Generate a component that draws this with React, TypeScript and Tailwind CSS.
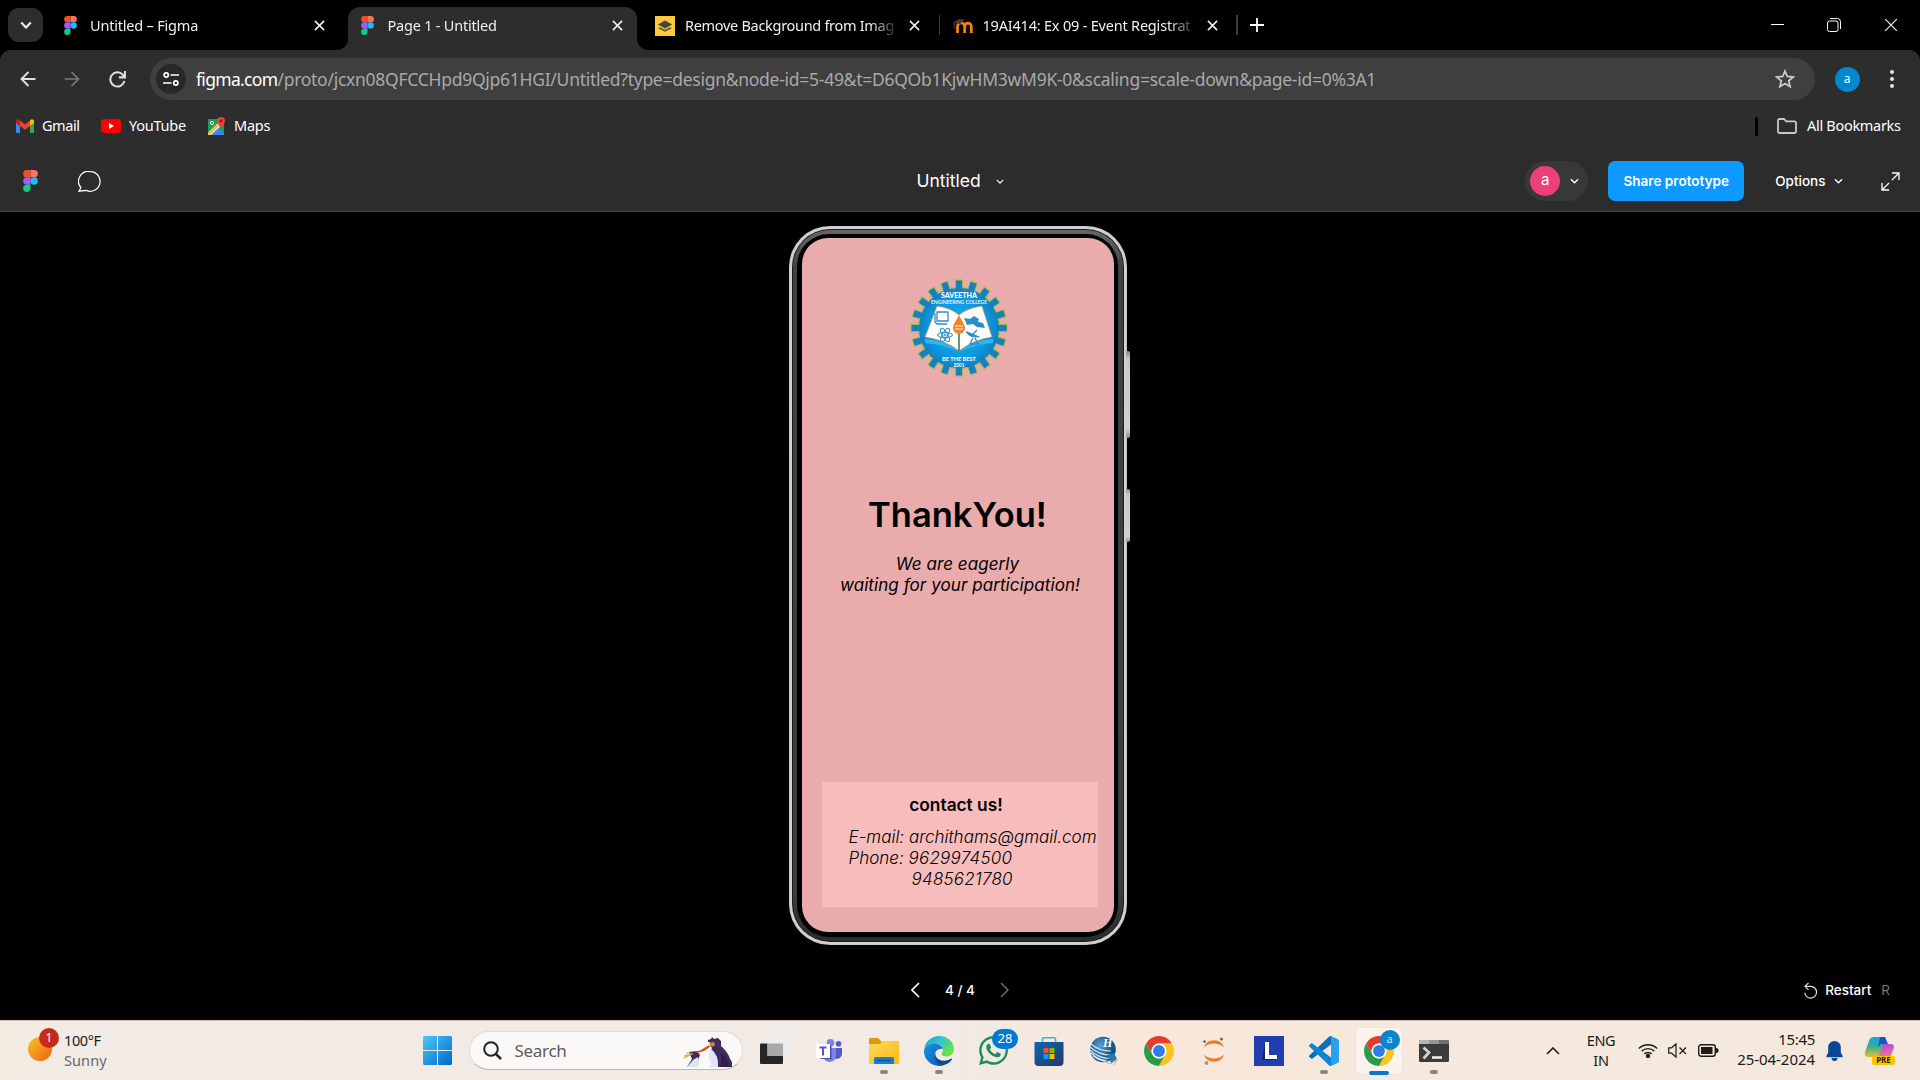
import React from "react";
import { FaWhatsapp } from "react-icons/fa";

type P = { className?: string };

const FigmaLogo = ({ className }: P) => (
  <svg viewBox="0 0 20 30" className={className}>
    <path d="M5 0h5v10H5A5 5 0 0 1 5 0z" fill="#f24e1e" />
    <path d="M10 0h5a5 5 0 0 1 0 10h-5z" fill="#ff7262" />
    <path d="M5 10h5v10H5a5 5 0 0 1 0-10z" fill="#a259ff" />
    <circle cx="15" cy="15" r="5" fill="#1abcfe" />
    <path d="M5 20h5v5a5 5 0 1 1-5-5z" fill="#0acf83" />
  </svg>
);

const Chevron = ({ className }: P) => (
  <svg viewBox="0 0 10 6" fill="none" stroke="currentColor" className={className}>
    <path d="M1 1l4 4 4-4" />
  </svg>
);

const CloseX = ({ className }: P) => (
  <svg viewBox="0 0 12 12" className={className} fill="none" stroke="currentColor">
    <path d="M1 1l10 10M11 1L1 11" />
  </svg>
);

const BgIcon = () => (
  <svg viewBox="0 0 20 20" className="h-5 w-5">
    <path fill="#ffc83d" d="M0 0h20v20H0z" />
    <path d="M3 12.2l7 3.6 7-3.6-2-1-5 2.5-5-2.5z" fill="#6b5a2c" />
    <path d="M10 4.5L2.8 8.6l7.2 4 7.2-4z" fill="#454545" />
  </svg>
);

const MoodleIcon = () => (
  <svg viewBox="0 0 20 16" className="h-4 w-5">
    <path d="M4.500 15V8.500a3.600 3.600 0 0 1 7.200 0V15M11.700 15V8.500a3.300 3.300 0 0 1 6.600 0V15" fill="none" stroke="#f08020" strokeWidth="2.800" />
    <path d="M0 4.500l6-3.500 6 .5-5 4.500z" fill="#453b37" />
    <path d="M1.200 5v6" stroke="#4c423d" />
  </svg>
);

type TabProps = { icon: React.ReactNode; title: string; text: string; active?: boolean; divider?: boolean };
const Tab = ({ icon, title, text, active, divider }: TabProps) => (
  <div className="flex h-[50px] w-[297.5px] shrink-0 items-end">
    <div className={`relative flex h-[43px] w-[289px] items-center pb-[6px] pl-[9.5px] ${active ? "rounded-t-[12px] bg-[#2d2d2d]" : ""}`}>
      {active && (
        <>
          <span className="absolute -left-3 bottom-0 h-3 w-3 bg-[radial-gradient(circle_at_0_0,#000_12px,#2d2d2d_12.5px)]" />
          <span className="absolute -right-3 bottom-0 h-3 w-3 bg-[radial-gradient(circle_at_100%_0,#000_12px,#2d2d2d_12.5px)]" />
        </>
      )}
      <span className="flex h-5 w-5 items-center justify-center">{icon}</span>
      <span className="mb-[2px] ml-[10px] w-[212px] whitespace-nowrap text-[14.500px] leading-5 [mask-image:linear-gradient(to_right,#000_185px,transparent_215px)]">
        <span className={text}>{title}</span>
      </span>
      <CloseX className="ml-[12px] h-[11px] w-[11px] stroke-[1.700]" />
    </div>
    {divider && <span className="mb-[15px] ml-[4px] h-5 w-[1.500px] bg-[#3c3c3c]" />}
  </div>
);

const TabStrip = () => (
  <div className="flex h-[50px] bg-black text-[#f0f0f0]">
    <div className="ml-2 mt-2 flex h-[34px] w-[35px] items-center justify-center rounded-[11px] bg-[#2d2d2d]">
      <Chevron className="h-[8px] w-[12px] stroke-[1.800]" />
    </div>
    <div className="ml-[7.500px] flex">
      <Tab icon={<FigmaLogo className="h-[19px] w-[13px]" />} title="Untitled – Figma" text="tracking-[-0.2px]" />
      <Tab icon={<FigmaLogo className="h-[19px] w-[13px]" />} title="Page 1 - Untitled" text="tracking-[-0.22px]" active />
      <Tab icon={<BgIcon />} title="Remove Background from Imag" text="tracking-[-0.3px]" divider />
      <Tab icon={<MoodleIcon />} title="19AI414: Ex 09 - Event Registrat" text="tracking-[-0.2px]" divider />
    </div>
    <svg viewBox="0 0 14 14" className="ml-[9px] mt-[18px] h-[14px] w-[14px]">
      <path d="M7 0v14M0 7h14" stroke="#fff" strokeWidth="1.800" />
    </svg>
    <div className="ml-auto mr-[22px] flex items-start gap-[43px] pt-[18px]">
      <span className="mt-[6px] h-px w-[13px] bg-white" />
      <svg viewBox="0 0 14 14" className="h-[14px] w-[14px]" fill="none" stroke="#fff">
        <rect x=".5" y="3" width="10.500" height="10.500" rx="2" />
        <path d="M3 .6h7.500a3 3 0 0 1 3 3V11" />
      </svg>
      <CloseX className="h-[14px] w-[14px] stroke-1" />
    </div>
  </div>
);

const Toolbar = () => (
  <div className="bg-black">
    <div className="flex h-[58px] items-center rounded-t-[11px] bg-[#2d2d2d] text-[#e0e0e0]">
      <svg viewBox="0 0 16 16" className="ml-5 h-4 w-4" fill="none" stroke="currentColor" strokeWidth="1.900">
        <path d="M15.500 8H1.500M8.500 1L1.500 8l7 7" />
      </svg>
      <svg viewBox="0 0 16 16" className="ml-[28px] h-4 w-4" fill="none" stroke="#7b7b7b" strokeWidth="1.700">
        <path d="M.5 8h14M7.500 1l7 7-7 7" />
      </svg>
      <svg viewBox="0 0 16 16" className="ml-[29px] h-[17px] w-[17px]" fill="none" stroke="currentColor" strokeWidth="1.900">
        <path d="M14.500 9.500A6.700 6.700 0 1 1 12.900 3.400L14.600 5.500M15 0v6H9.300" />
      </svg>
      <div className="ml-[24px] flex h-[42px] w-[1664.500px] items-center rounded-full bg-[#3f3f3f] pl-[6px] pr-5">
        <span className="flex h-[30px] w-[30px] items-center justify-center rounded-full bg-[#282828]">
          <svg viewBox="0 0 16 14" className="h-[14px] w-4" fill="none" stroke="#fff" strokeWidth="1.700">
            <circle cx="3.200" cy="3" r="2.100" />
            <path d="M7.500 3H16M0 11h8.500" />
            <circle cx="12.800" cy="11" r="2.100" />
          </svg>
        </span>
        <span className="ml-[10px] whitespace-nowrap text-[17.500px] tracking-[-0.27px] text-[#a9a9a9]">
          <span className="tracking-[-0.68px] text-white">figma.com</span>/proto/jcxn08QFCCHpd9Qjp61HGI/Untitled?type=design&amp;node-id=5-49&amp;t=D6QOb1KjwHM3wM9K-0&amp;scaling=scale-down&amp;page-id=0%3A1
        </span>
        <svg viewBox="0 0 20 20" className="ml-auto h-5 w-5" fill="none" stroke="#c9c9c9" strokeWidth="1.800">
          <path d="M10 2l2.300 5.500 6 .5-4.600 3.900 1.400 5.800-5.100-3.100-5.100 3.100 1.400-5.800L1.700 8l6-.5z" />
        </svg>
      </div>
      <span className="ml-5 flex h-[25px] w-[25px] items-center justify-center rounded-full bg-[#0288d1] pb-px text-[12px] text-white">a</span>
      <svg viewBox="0 0 4 18" className="ml-[30.500px] h-[18px] w-1 fill-[#e4e4e4]">
        <circle cx="2" cy="2" r="2" />
        <circle cx="2" cy="9" r="2" />
        <circle cx="2" cy="16" r="2" />
      </svg>
    </div>
  </div>
);

const Bookmarks = () => (
  <div className="flex h-[43px] items-center bg-[#2d2d2d] pb-[7px] pl-4 pr-[18px] text-[14.500px] text-white">
    <svg viewBox="0 0 18 14" className="h-[14px] w-[18px]">
      <path d="M0 2v11a1 1 0 0 0 1 1h3V5z" fill="#4285f4" />
      <path d="M18 2v11a1 1 0 0 1-1 1h-3V5z" fill="#34a853" />
      <path d="M14 1.500L15 .6a1.900 1.900 0 0 1 3 1.500V4l-4 3z" fill="#fbbc04" />
      <path d="M4 1.500L3 .6A1.900 1.900 0 0 0 0 2.100V4l4 3z" fill="#c5221f" />
      <path d="M4 1.500l5 3.800 5-3.800V7l-5 3.800L4 7z" fill="#ea4335" />
    </svg>
    <span className="ml-2 w-[39px] whitespace-nowrap tracking-[-0.45px]">Gmail</span>
    <svg viewBox="0 0 20 14" className="ml-5 h-[14px] w-5">
      <rect width="20" height="14" rx="3.500" fill="#f00" />
      <path d="M8 4l5 3-5 3z" fill="#fff" />
    </svg>
    <span className="ml-2 w-[58px] whitespace-nowrap tracking-[-0.25px]">YouTube</span>
    <svg viewBox="0 0 18 18" className="ml-[21px] h-[18px] w-[18px]">
      <rect y="2" width="16" height="16" rx="1" fill="#1e9e5a" />
      <path d="M1 18L9 9l7 8v1z" fill="#4285f4" />
      <path d="M0 16L13 3l3 3L3 18H0z" fill="#e8eaed" />
      <path d="M0 16l9-9 1.500 2L2 18H0z" fill="#fbc02d" />
      <path d="M4 18l5-5.500 5 5.500z" fill="#4285f4" />
      <circle cx="4" cy="6" r="1.600" fill="none" stroke="#fff" />
      <path d="M13 0a4 4 0 0 1 4 4c0 2.800-4 7-4 7S9 6.800 9 4a4 4 0 0 1 4-4z" fill="#ea4335" />
      <circle cx="13" cy="4" r="1.400" fill="#8c1d18" />
    </svg>
    <span className="ml-2 whitespace-nowrap tracking-[-0.25px]">Maps</span>
    <span className="ml-auto h-[19px] w-[3px] rounded bg-black" />
    <svg viewBox="0 0 20 16" className="ml-[19px] h-4 w-5" fill="none" stroke="#c9c9c9" strokeWidth="1.800">
      <path d="M1 13.500v-11A1.500 1.500 0 0 1 2.500 1H7l2.200 2.400h8.300A1.500 1.500 0 0 1 19 5v8.500a1.500 1.500 0 0 1-1.500 1.500h-15A1.500 1.500 0 0 1 1 13.500z" />
    </svg>
    <span className="ml-[10px] w-[95px] whitespace-nowrap tracking-[-0.3px]">All Bookmarks</span>
  </div>
);

const FigmaHeader = () => (
  <div className="grid h-[61px] grid-cols-[1fr_auto_1fr] items-center border-b border-[#444] bg-[#2c2c2c] font-[Inter,sans-serif] text-white">
    <div className="flex items-center pl-[23px]">
      <FigmaLogo className="h-[22px] w-[15px]" />
      <svg viewBox="0 0 23 21" className="ml-10 h-[21px] w-[23px]" fill="none" stroke="#fff" strokeWidth="1.200">
        <path d="M12.500.7a9.800 9.800 0 1 1-4.300 18.700L1 20.200l1.900-3.600A9.800 9.800 0 0 1 12.500.7z" />
      </svg>
    </div>
    <div className="flex items-center text-[17.500px]">
      <span>Untitled</span>
      <Chevron className="ml-[15px] h-[5px] w-[8px] stroke-[1.500]" />
    </div>
    <div className="flex items-center justify-end pr-5">
      <div className="flex h-10 w-[63px] items-center rounded-full bg-[#383838] pl-[5px]">
        <span className="flex h-[30px] w-[30px] items-center justify-center rounded-full bg-[#ec407a] pb-px text-[15px]">a</span>
        <Chevron className="ml-[10px] h-[6px] w-[9px] stroke-[1.500]" />
      </div>
      <span className="ml-5 flex h-10 w-[136px] items-center justify-center rounded-[7px] bg-[#0d99ff] text-[13.500px] font-semibold tracking-[0.03px]">Share prototype</span>
      <span className="ml-[31px] text-[13.500px] font-medium">Options</span>
      <Chevron className="ml-[8px] h-[6px] w-[9px] stroke-[1.500]" />
      <svg viewBox="0 0 19 19" className="ml-[38.500px] h-[19px] w-[19px]" fill="none" stroke="#fff" strokeWidth="1.300">
        <path d="M11 1h7v7M18 1l-7 7M1 11v7h7M1 18l7-7" />
      </svg>
    </div>
  </div>
);

const TEETH = Array.from({ length: 20 }, (_, i) => i * 18);

const CollegeLogo = () => (
  <svg viewBox="-50 -50 100 100" className="h-[100px] w-[100px] font-[Lato,sans-serif]">
    <defs>
      <radialGradient id="gear">
        <stop offset="0" stopColor="#18b4f0" />
        <stop offset=".75" stopColor="#0a97de" />
        <stop offset="1" stopColor="#1380c4" />
      </radialGradient>
    </defs>
    <g stroke="#9cc04e" strokeWidth="1.200">
      {TEETH.map((a) => (
        <rect key={a} x="-3.500" y="-48" width="7" height="12" fill="#1474b4" transform={`rotate(${a})`} />
      ))}
      <circle r="40.500" fill="url(#gear)" />
    </g>
    {TEETH.map((a) => (
      <rect key={a} x="-2.900" y="-47" width="5.800" height="10" fill="#1680c2" transform={`rotate(${a})`} />
    ))}
    <path d="M-34 11Q-14 12 0 24 14 12 34 11v4Q14 17 0 24-14 17-34 15z" fill="#30b5ee" />
    <path d="M-22-22Q-8-20 0-13 8-20 23-22L33 9Q14 12 0 23-14 12-34 9z" fill="#fff" stroke="#c8863c" strokeWidth=".7" />
    <path d="M0 0v23" stroke="#38734c" strokeWidth="1.500" />
    <path d="M0-13C2-8 6-4 6 0a6 6 0 0 1-12 0C-6-4-2-8 0-13z" fill="#f58220" />
    <path d="M-4-2h8M-4 1h8" stroke="#fff" strokeWidth="1.200" />
    <g fill="none" stroke="#2b8fc4">
      <path d="M-22-16h11v9h-11zM-24-15v9l2 2h10" strokeWidth="1.300" />
      <ellipse cx="-14" cy="7" rx="7.500" ry="2.600" />
      <ellipse cx="-14" cy="7" rx="7.500" ry="2.600" transform="rotate(60 -14 7)" />
      <ellipse cx="-14" cy="7" rx="7.500" ry="2.600" transform="rotate(120 -14 7)" />
      <circle cx="-14" cy="7" r="1" />
      <path d="M7 4l13 5M13 7l5-5M14 10l-3 6h8l-3-6" strokeWidth="1.300" />
    </g>
    <path d="M7 3q2 8 14 6z" fill="#2b8fc4" />
    <path d="M5-10l6 1 4-3 5 3-1 3 5 1 2 5-8-1-4-3-6 1z" fill="#2b8fc4" />
    <g fill="#fff" textAnchor="middle">
      <text y="-30.500" fontSize="7" fontWeight="900" textLength="36" lengthAdjust="spacingAndGlyphs">SAVEETHA</text>
      <text y="-24" fontSize="5" textLength="56" lengthAdjust="spacingAndGlyphs" fontWeight="600">ENGINEERING COLLEGE</text>
      <text y="32.500" fontSize="5.500" textLength="34" lengthAdjust="spacingAndGlyphs" fontWeight="700">BE THE BEST</text>
      <text y="38.500" fontSize="5" textLength="11" lengthAdjust="spacingAndGlyphs" fontWeight="700">2001</text>
    </g>
  </svg>
);

const Phone = () => (
  <div className="relative mr-[5px] mt-[14px] h-[719px] w-[338px] rounded-[41px] bg-gradient-to-b from-[#c8c8c8] via-[#bdbdbd] to-[#c8c8c8] p-[1px]">
    <span className="absolute -right-[3px] top-[125px] h-[87px] w-[4px] rounded-r-[2px] bg-[linear-gradient(to_bottom,#8a8a8a,#c9c9c9_10%,#d0d0d0_90%,#8a8a8a)]" />
    <span className="absolute -right-[3px] top-[263px] h-[53px] w-[4px] rounded-r-[2px] bg-[linear-gradient(to_bottom,#8a8a8a,#c9c9c9_10%,#d0d0d0_90%,#8a8a8a)]" />
    <div className="h-full w-full rounded-[40px] bg-[#d2d2d2] p-[2px]">
      <div className="h-full w-full rounded-[38px] bg-[#1c1c1c] p-[1px]">
        <div className="h-full w-full rounded-[37px] bg-[linear-gradient(to_bottom,#666,#414141_40px,#3c3c3c_660px,#2b2b2b)] px-[4.500px] py-[4px]">
          <div className="h-full w-full rounded-[32px] bg-black px-[4.500px] pb-[5.500px] pt-[4px]">
            <div className="flex h-full w-full flex-col items-center rounded-[26px] bg-[#e9abab] font-[Inter,sans-serif] text-black">
              <div className="ml-[2px] mt-[40px] h-[100px]"><CollegeLogo /></div>
              <div className="mt-[116px] h-[42px] whitespace-nowrap text-[34.500px] font-semibold leading-[42px]">ThankYou!</div>
              <div className="ml-[5px] mt-[18px] whitespace-nowrap text-center text-[17px] italic leading-[20.750px] tracking-[0.070px]">
                <div className="-ml-[5px]">We are eagerly</div>
                <div>waiting for your participation!</div>
              </div>
              <div className="mb-[24.500px] ml-[4px] mt-auto h-[125px] w-[276px] bg-[#f7bdbd]">
                <div className="ml-[-7px] mt-[12px] h-[21px] text-center text-[17.300px] font-semibold leading-[21px]">contact us!</div>
                <div className="ml-[27px] mt-[12px] whitespace-pre text-[17px] font-light italic leading-[20.750px]">
                  <div>E-mail: archithams@gmail.com</div>
                  <div>Phone: <span className="tracking-[0.250px]">9629974500</span></div>
                  <div className="pl-[63px] tracking-[0.250px]">9485621780</div>
                </div>
              </div>
            </div>
          </div>
        </div>
      </div>
    </div>
  </div>
);

const Canvas = () => (
  <div className="flex h-[808px] flex-col items-center bg-black font-[Inter,sans-serif] text-white">
    <Phone />
    <div className="mt-[35px] grid w-full grid-cols-[1fr_auto_1fr] items-center text-[13.500px] font-medium">
      <span />
      <div className="flex items-center">
        <svg viewBox="0 0 9 16" className="h-4 w-[9px]" fill="none" stroke="#fff" strokeWidth="1.600">
          <path d="M8 1L1 8l7 7" />
        </svg>
        <span className="ml-[25px] w-[30px] whitespace-nowrap">4 / 4</span>
        <svg viewBox="0 0 9 16" className="ml-[25px] h-4 w-[9px]" fill="none" stroke="#777" strokeWidth="1.300">
          <path d="M1 1l7 7-7 7" />
        </svg>
      </div>
      <div className="flex items-center justify-end pr-[30px]">
        <svg viewBox="0 0 14 17" className="h-[17px] w-[14px]" fill="none" stroke="#ddd" strokeWidth="1.200">
          <path d="M4.500.8L1 4.300l3.500 3.500M1 4.300h5.700a5.900 5.900 0 1 1-5.900 6.400" />
        </svg>
        <span className="ml-[7.500px]">Restart</span>
        <span className="ml-[10px] font-normal text-[#777]">R</span>
      </div>
    </div>
  </div>
);

const Chrome = () => (
  <svg viewBox="0 0 48 48" className="h-[30px] w-[30px]">
    <path d="M24 12h20.780A24 24 0 0 0 3.220 12L13.610 30A12 12 0 0 1 24 12z" fill="#e33b2e" />
    <path d="M3.220 12A24 24 0 0 0 24 48l10.390-18a12 12 0 0 1-20.780 0z" fill="#2a9c48" />
    <path d="M44.780 12A24 24 0 0 1 24 48l10.390-18A12 12 0 0 0 24 12z" fill="#fcc31e" />
    <circle cx="24" cy="24" r="12" fill="#fff" />
    <circle cx="24" cy="24" r="9.500" fill="#2f7de9" />
  </svg>
);

const Teams = () => (
  <svg viewBox="0 0 26 24" className="h-6 w-[26px]">
    <circle cx="22.500" cy="4.800" r="2.800" fill="#5059c9" />
    <circle cx="14.500" cy="3.800" r="3.800" fill="#7b83eb" />
    <path d="M16 9h10v6a5 5 0 0 1-7 4.500z" fill="#5059c9" />
    <path d="M8 9h12v8a6.500 6.500 0 0 1-12 3z" fill="#7b83eb" />
    <path d="M0 5h14v14H0z" fill="#fff" />
    <path d="M14 6v13H4l1 1h10.500V7z" fill="#4b51a8" />
    <path d="M3.500 8.500h7M7 8.500v8" stroke="#5059c9" strokeWidth="2" />
  </svg>
);

const Explorer = () => (
  <svg viewBox="0 0 30 26" className="h-[26px] w-[30px]">
    <defs><linearGradient id="fold" x2="1" y2="1"><stop stopColor="#ffd95a" /><stop offset="1" stopColor="#fdb813" /></linearGradient></defs>
    <path d="M0 1q0-1 1-1h8l4 4v4H0z" fill="#dc9a06" />
    <path d="M0 6h11l2.500-3H29q1 0 1 1v21q0 1-1 1H1q-1 0-1-1z" fill="url(#fold)" />
    <path d="M5 26v-5q0-2 2-2h16q2 0 2 2v5z" fill="#1480d4" />
    <path d="M8 22.500h14" stroke="#0a4d92" />
  </svg>
);

const Edge = () => (
  <svg viewBox="0 0 30 30" className="h-[30px] w-[30px]">
    <defs>
      <linearGradient id="e1" x2="1" y2=".6"><stop stopColor="#1d9fdc" /><stop offset=".5" stopColor="#35c4cf" /><stop offset="1" stopColor="#6ee23f" /></linearGradient>
      <linearGradient id="e2" x2="1" y2="1"><stop stopColor="#1596e6" /><stop offset="1" stopColor="#0b57ab" /></linearGradient>
    </defs>
    <path d="M.3 13C1 5.500 7.500 0 15 0c9 0 15 6.300 15 13 0 5-4 7.500-7.500 7.500-3 0-5-1.200-5-2.500 0-.8 1.500-1.500 1.500-4 0-3.200-3.500-6-8-6C5.500 8 1.500 10 .3 13z" fill="url(#e1)" />
    <path d="M0 15c0-4 4.500-7.200 10-7.200 4 0 8 1.900 9 5.200-5-1-9 2.500-8 8 .8 4.500 5 8 9 8-1.500.7-3 1-5 1A15 15 0 0 1 0 15z" fill="url(#e2)" />
    <path d="M11.500 17c-.5 5 4 7.700 8.500 7.700 3 0 5.500-1 7.500-2.200.5-.2.800.3.500.7C26 26.500 22 29.500 17.500 29 12 27.500 8.500 21 12.500 15z" fill="#134a8f" />
  </svg>
);

const Store = () => (
  <svg viewBox="0 0 30 30" className="h-[30px] w-[30px]">
    <defs><linearGradient id="st" y2="1"><stop stopColor="#0f65b5" /><stop offset="1" stopColor="#223a68" /></linearGradient></defs>
    <path d="M8.500 7V3q0-1.300 1.300-1.300h10.400q1.300 0 1.300 1.300v4" fill="none" stroke="#2fb8ee" strokeWidth="1.600" />
    <path d="M.5 6h29v20a4 4 0 0 1-4 4h-21a4 4 0 0 1-4-4z" fill="url(#st)" />
    <path d="M9.500 12h5v5h-5z" fill="#f25022" />
    <path d="M15.500 12h5v5h-5z" fill="#7fba00" />
    <path d="M9.500 18h5v5h-5z" fill="#00a4ef" />
    <path d="M15.500 18h5v5h-5z" fill="#ffb900" />
  </svg>
);

const Globe = () => (
  <svg viewBox="0 0 30 30" className="h-[30px] w-[30px]">
    <defs><radialGradient id="gl" cx=".4" cy=".35"><stop stopColor="#5f9fd0" /><stop offset="1" stopColor="#115288" /></radialGradient></defs>
    <circle cx="14" cy="13.500" r="12.800" fill="url(#gl)" />
    <path d="M1 11q9 8 20 8M1 14q8 8 19 8.500M2 17q7 7 16 7.500M4 20q5 4 12 5.500M2 8q8 7 20 7" fill="none" stroke="#cfe2f0" strokeWidth="1.200" />
    <text x="14" y="10.500" fill="#fff" fontSize="12" fontWeight="700" fontStyle="italic" className="font-['Liberation_Serif',serif]">H</text>
    <path d="M18 19l7-2 3 6-6 4z" fill="#2d75ab" />
    <path d="M15 25l6 3 7-4-3 5" fill="none" stroke="#aab4bd" />
  </svg>
);

const Jupyter = () => (
  <svg viewBox="0 0 22 28" className="h-7 w-[22px]">
    <path d="M.8 10.500a10.800 10.800 0 0 1 20.400 0Q17 6.500 11 6.500T.8 10.500z" fill="#f37726" />
    <path d="M.8 17.500a10.800 10.800 0 0 0 20.400 0Q17 21.500 11 21.500T.8 17.500z" fill="#f37726" />
    <circle cx="18.500" cy="2" r="1.600" fill="#6c6c6c" />
    <circle cx="1.500" cy="4.500" r="1.200" fill="#555" />
    <circle cx="3.500" cy="26" r="1.900" fill="#999" />
  </svg>
);

const LApp = () => (
  <svg viewBox="0 0 30 30" className="h-[30px] w-[30px]">
    <path d="M0 0h30v30H0z" fill="#1f3fb0" />
    <path d="M11 6L8 24l15 0-8-4z" fill="#122a55" />
    <path d="M11 6h4v13h8v4H11z" fill="#fff" />
  </svg>
);

const VsCode = () => (
  <svg viewBox="0 0 30 30" className="h-[30px] w-[30px]">
    <path d="M22 0v8.500L3.500 22.500q-.8.600-1.500 0L.3 21q-.6-.8 0-1.500L20 .8q1-1 2-.8z" fill="#0b6fb8" />
    <path d="M22 30v-8.500L3.500 7.500Q2.700 6.900 2 7.500L.3 9q-.6.800 0 1.500L20 29.200q1 1 2 .8z" fill="#0e85d2" />
    <path d="M22 0l7 3.200q1 .5 1 1.500v20.600q0 1-1 1.500L22 30z" fill="#27a0f0" />
  </svg>
);

const Terminal = () => (
  <svg viewBox="0 0 30 22" className="h-[22px] w-[30px]">
    <rect width="30" height="22" rx="1.500" fill="#3b3b3b" />
    <path d="M0 4V1.500Q0 0 1.500 0H10v4z" fill="#b5b5b5" />
    <path d="M10 0h10v4H10z" fill="#969696" />
    <path d="M20 0h8.500Q30 0 30 1.500V4H20z" fill="#6f6f6f" />
    <path d="M4.500 7.500l5.500 5-5.500 6" fill="none" stroke="#d0d0d0" strokeWidth="2.800" />
    <path d="M13 17.500h10" stroke="#f2f2f2" strokeWidth="2.500" />
  </svg>
);

const TaskView = () => (
  <svg viewBox="0 0 30 28" className="mb-px ml-[2px] h-7 w-[30px]">
    <rect y="7.500" width="23" height="20.500" rx="1" fill="#262626" />
    <rect x="7.500" width="22.500" height="20" rx="1" fill="#ececec" />
    <path d="M7.500 7.500H23V20H7.500z" fill="#a9a9a8" />
  </svg>
);

const Penguins = () => (
  <svg viewBox="0 0 48 31" className="h-[31px] w-12">
    <path d="M26 30q3-3 1-9-2-6 1-10-3-3-2-6l-2 0 0-2 3-1 1-2 2 2 4-1 3 3 0 5q7 6 9 13 3 3 2 8z" fill="#43295c" />
    <path d="M27 12q-3 5-2 10 3 4 1 8h8q1-12-7-18z" fill="#dfe7f2" />
    <path d="M30 11q4 6 4 12 1 4 0 7h10q-1-12-9-19z" fill="#43295c" />
    <path d="M37 16q8 6 8 14h-8z" fill="#321c48" />
    <path d="M5 15l8-1 3 4-2 6-4 6H3l5-8z" fill="#43295c" />
    <path d="M9 23l5-3q2 4 0 10H3z" fill="#dde6f0" />
    <path d="M0 19l9-2-7-1M0 21l6-3" stroke="#dba73a" strokeWidth="1.200" fill="none" />
    <path d="M11 15l6-2 8-5 1 2-6 4-7 2z" fill="#e2492b" />
    <path d="M25 6l5-1 1 3-3 2z" fill="#c99037" />
  </svg>
);

const Slot = ({ children, dot }: { children: React.ReactNode; dot?: boolean }) => (
  <div className="relative flex h-full w-[55px] items-center justify-center">
    {children}
    {dot && <span className="absolute bottom-[6px] h-1 w-2 rounded-full bg-[#8a8580]" />}
  </div>
);

const Taskbar = () => (
  <div className="flex h-[60px] items-center border-t border-[#c9c0ba] bg-[linear-gradient(90deg,#f4ebe0_0,#f2ebe6_80px,#f1eae5_500px,#f1eae5_950px,#f8e7da_1150px,#f6e8dc_1400px,#f4e8dc_1920px)] text-[#1b1b1b]">
    <div className="relative ml-7 h-full w-6">
      <span className="absolute left-0 top-[16px] h-6 w-6 rounded-full bg-gradient-to-br from-[#efc22c] to-[#f25d0a]" />
      <span className="absolute left-[11px] top-[7px] flex h-5 w-5 items-center justify-center rounded-full bg-[#c42b1c] text-[12px] text-white">1</span>
    </div>
    <div className="mb-[2px] ml-3 w-[80px] text-[14.500px] leading-5">
      <div className="tracking-[-0.4px]">100°F</div>
      <div className="tracking-[0.1px] text-[#6b6764]">Sunny</div>
    </div>
    <svg viewBox="0 0 29 29" className="ml-[279px] h-[29px] w-[29px]">
      <defs><linearGradient id="win" gradientUnits="userSpaceOnUse" x1="0" y1="0" x2="29" y2="29"><stop stopColor="#4cc8fb" /><stop offset="1" stopColor="#0067c9" /></linearGradient></defs>
      <path d="M1 0h13v14H0V1zM15 0h13l1 1v13H15zM0 15h14v14H1l-1-1zM15 15h14v13l-1 1H15z" fill="url(#win)" />
    </svg>
    <div className="ml-[17px] flex h-[39px] w-[274px] items-center rounded-full border border-[#e2dad5] border-b-[#bcb5b0] bg-[#fbf9f7] pl-[13px]">
      <svg viewBox="0 0 19 19" className="h-[19px] w-[19px]" fill="none" stroke="#222" strokeWidth="2">
        <circle cx="8" cy="8" r="6.800" />
        <path d="M12.800 12.800l5.200 5.200" strokeWidth="2.500" />
      </svg>
      <span className="ml-[12.500px] w-[52px] text-[17px] tracking-[-0.3px] text-[#5d5b5a]">Search</span>
      <span className="ml-[117px] self-end pb-[1px]"><Penguins /></span>
    </div>
    <div className="ml-[3px] flex h-full">
      <Slot><TaskView /></Slot>
      <Slot><Teams /></Slot>
      <Slot dot><Explorer /></Slot>
      <Slot dot><Edge /></Slot>
      <Slot>
        <FaWhatsapp className="h-[33px] w-[33px] text-[#1f8f57]" />
        <span className="absolute left-[26px] top-[8px] flex h-5 w-[26px] items-center justify-center rounded-full bg-[#0078d4] text-[13px] text-white">28</span>
      </Slot>
      <Slot><Store /></Slot>
      <Slot><Globe /></Slot>
      <Slot><Chrome /></Slot>
      <Slot><Jupyter /></Slot>
      <Slot><LApp /></Slot>
      <Slot dot><VsCode /></Slot>
      <Slot>
        <div className="relative flex h-12 w-12 items-center justify-center rounded-[5px] border border-[#efe4dc] bg-[#fbf3ed]">
          <Chrome />
          <span className="absolute right-[2px] top-[2px] flex h-5 w-5 items-center justify-center rounded-full bg-[#0a86cc] text-[11px] text-[#cfe8f8]">a</span>
          <span className="absolute bottom-[-1px] h-1 w-5 rounded-full bg-[#0078d4]" />
        </div>
      </Slot>
      <Slot dot><Terminal /></Slot>
    </div>
    <div className="ml-auto flex h-full items-center pr-[25px]">
      <svg viewBox="0 0 14 8" className="h-2 w-[14px]" fill="none" stroke="#1b1b1b" strokeWidth="1.600"><path d="M1 7l6-6 6 6" /></svg>
      <div className="mb-px ml-[26px] w-[30px] text-center text-[14.500px] leading-5 tracking-[-0.3px]">
        <div>ENG</div>
        <div>IN</div>
      </div>
      <svg viewBox="0 0 20 15" className="ml-[22px] h-[15px] w-5" fill="none" stroke="#1b1b1b" strokeWidth="1.400">
        <path d="M.8 5.500a13 13 0 0 1 18.400 0M3.600 8.300a9 9 0 0 1 12.800 0M6.300 11a5.200 5.200 0 0 1 7.400 0" />
        <circle cx="10" cy="13" r="1.500" fill="#1b1b1b" />
      </svg>
      <svg viewBox="0 0 19 15" className="ml-[10px] h-[15px] w-[19px]" fill="none" stroke="#1b1b1b" strokeWidth="1.200">
        <path d="M.7 4.800h3L8 .9v13.200l-4.300-3.900h-3zM11.500 4.500l6.500 6.500M18 4.500L11.500 11" />
      </svg>
      <svg viewBox="0 0 21 13" className="ml-[11px] h-[13px] w-[21px]">
        <rect x=".7" y=".7" width="16.600" height="11.600" rx="2.500" fill="none" stroke="#1b1b1b" strokeWidth="1.400" />
        <rect x="3" y="3" width="11.500" height="7" fill="#1b1b1b" />
        <path d="M18 4q2.500 0 2.500 2.500T18 9z" fill="#1b1b1b" />
      </svg>
      <div className="mb-[3px] ml-[16px] w-[80px] whitespace-nowrap text-right text-[15px] leading-5">
        <div className="tracking-[-0.3px]">15:45</div>
        <div className="tracking-[-0.05px]">25-04-2024</div>
      </div>
      <svg viewBox="0 0 17 20" className="ml-[11px] h-5 w-[17px] fill-[#0b4595]">
        <path d="M8.500 0a6.300 6.300 0 0 1 6.300 6.300v5.200l1.900 3.700q.3 1-.7 1H1q-1 0-.7-1l1.900-3.700V6.300A6.300 6.300 0 0 1 8.500 0zM5.500 17h6a3 3 0 0 1-6 0z" />
      </svg>
      <div className="relative ml-[22px] h-[30px] w-[30px]">
        <svg viewBox="0 0 30 30" className="h-[30px] w-[30px]">
          <defs>
            <linearGradient id="c1" x2="0" y2="1"><stop stopColor="#14a0f0" /><stop offset=".5" stopColor="#3fae8c" /><stop offset="1" stopColor="#e8c02a" /></linearGradient>
            <linearGradient id="c2" x2=".3" y2="1"><stop stopColor="#a04be8" /><stop offset="1" stopColor="#fb6f8e" /></linearGradient>
          </defs>
          <path d="M9 1h10q2 0 1 3l-4 14q-1 3-4 3H3q-4 0-3-5L4 5q1-4 5-4z" fill="url(#c1)" />
          <path d="M15 1h5l3 7h-7l-3 3z" fill="#1953c4" />
          <path d="M18 8h8q4 0 2.500 5L25 22H12q2-1 2.700-4z" fill="url(#c2)" />
        </svg>
        <span className="absolute bottom-[1px] left-[7px] flex h-[9px] w-[23px] items-center justify-center rounded-[2px] bg-[#ffc400] text-[8px] font-bold leading-none">PRE</span>
      </div>
    </div>
  </div>
);

export default function App() {
  return (
    <div className="flex h-[1080px] w-[1920px] flex-col overflow-hidden bg-black font-['Noto_Sans',sans-serif]">
      <TabStrip />
      <Toolbar />
      <Bookmarks />
      <FigmaHeader />
      <Canvas />
      <Taskbar />
    </div>
  );
}
